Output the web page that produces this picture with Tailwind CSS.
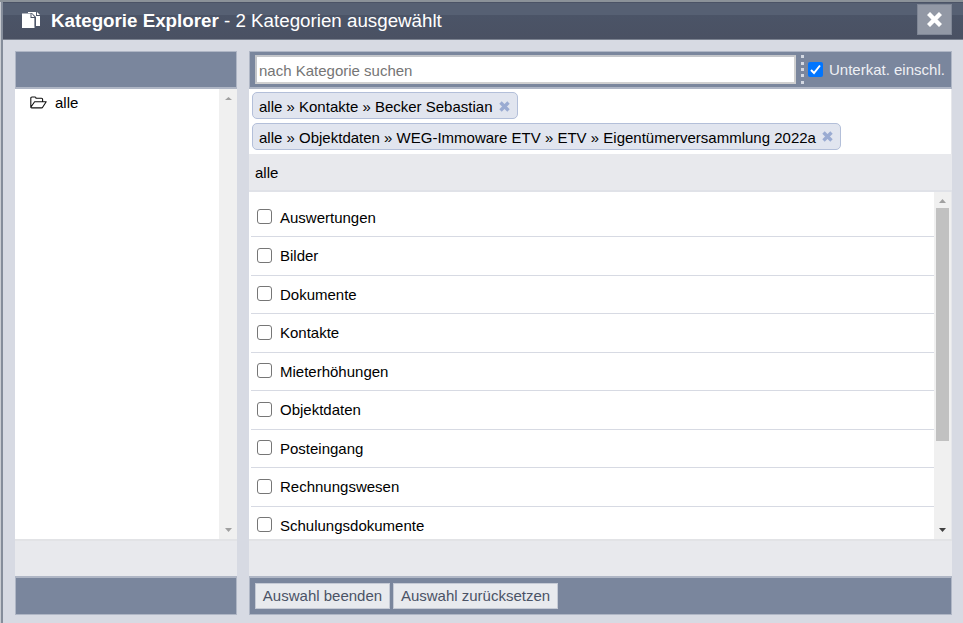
<!DOCTYPE html>
<html lang="de">
<head>
  <meta charset="UTF-8">
  <meta name="viewport" content="width=device-width, initial-scale=1.0">
  <title>Kategorie Explorer</title>
  <script src="https://cdn.jsdelivr.net/npm/@tailwindcss/browser@4"></script>
</head>
<body class="h-screen overflow-hidden bg-[#8b9299] pt-[2px] font-['Liberation_Sans',Arial,sans-serif] text-[15px] leading-[18px] text-black">

  <!-- Dialog -->
  <div class="flex h-[621px] flex-col border-l border-[#c9ccd2]">
  <div class="flex h-full flex-col border-l-2 border-[#858d9b] bg-[#d7dae3]">

    <!-- Titelleiste -->
    <header class="flex h-[38px] shrink-0 items-center border-t border-b border-t-[#4b5366] border-b-[#7b8290] bg-[linear-gradient(#566073_0,#566073_12px,#4b5467_12px,#4a5163_100%)] pr-[11px] pl-[19px] text-white">
      <svg class="mb-[2px] h-[16px] w-[19px]" viewBox="0 0 19 16">
        <path d="M6 0h8v4h4v10h-4V5l-4-4H6z" fill="#fff"/>
        <path d="M15 0l3 3h-3z" fill="#fff"/>
        <path d="M0 1.500h8.500v4.500h4V16H0z" fill="#fff"/>
        <path d="M9.500 1.500l3 3.500h-3z" fill="#fff"/>
        <path d="M13.200 5.500V14.500" stroke="#566073" stroke-width=".8"/>
      </svg>
      <h1 class="ml-[10px] text-[18.75px] whitespace-pre"><b>Kategorie Explorer</b> - 2 Kategorien ausgewählt</h1>
      <button class="mb-[3px] ml-auto flex h-[31px] w-[35px] items-center justify-center border border-[#7f8695] bg-[#9298a5]">
        <svg class="h-[15px] w-[15px]" viewBox="0 0 15 15"><path d="M1.500 1.500l12 12M13.500 1.500l-12 12" stroke="#fff" stroke-width="4.300"/></svg>
      </button>
    </header>

    <main class="flex gap-3 pt-[11px] pl-3">

      <!-- Kategoriebaum -->
      <section class="flex h-[564px] w-[222px] flex-col">
        <div class="h-[38px] shrink-0 border border-b-2 border-[#afb6c5] bg-[#7a869d]"></div>
        <div class="flex h-[450px] shrink-0 justify-between bg-white">
          <div class="flex h-[27px] items-center pl-[15px]">
            <svg class="h-[13px] w-[17px]" viewBox="0 0 17 13" fill="none" stroke="#111" stroke-width="1.1" stroke-linejoin="round">
              <path d="M.8 11.3V2.2Q.8 1 2 1h3q1 0 1 1.2h5.5q1.1 0 1.1 1.1V5.5M.8 11.3L4.6 5.7h11.6L12.8 11q-.4.9-1.3.9H1.6q-.8 0-.8-.6z"/>
            </svg>
            <span class="ml-[8px]">alle</span>
          </div>
          <div class="flex w-[18px] flex-col items-center justify-between bg-[#f0f0f0] pt-[8px] pb-[7px]">
            <svg class="h-[3px] w-[7px]" viewBox="0 0 7 3"><path d="M0 3L3.5 0 7 3z" fill="#a0a0a0"/></svg>
            <svg class="h-[4px] w-[7px]" viewBox="0 0 7 4"><path d="M0 0h7L3.5 4z" fill="#a0a0a0"/></svg>
          </div>
        </div>
        <div class="h-[37px] shrink-0 border-t-2 border-[#e2e3e6] bg-[#e8e9ed]"></div>
        <div class="h-[39px] shrink-0 border border-t-2 border-[#afb6c5] bg-[#7a869d]"></div>
      </section>

      <!-- Kategorieauswahl -->
      <section class="flex h-[564px] w-[703px] flex-col">
        <div class="flex h-[38px] shrink-0 items-start border border-b-2 border-[#afb6c5] bg-[#7a869d] pt-[3px] pl-[5px]">
          <input type="text" placeholder="nach Kategorie suchen" class="h-[29px] w-[541px] shrink-0 border-2 border-t-[#c4c6ca] border-r-[#d0d0d0] border-b-[#d0d0d0] border-l-[#c4c6ca] bg-white px-[2px] pt-[2px] placeholder:text-[#757575]">
          <div class="ml-[5px] h-[29px] border-l-[3px] border-dotted border-[#d3d8e2]"></div>
          <label class="flex h-[29px] items-center pl-[4px] text-[#eef0f4]">
            <span class="flex h-[15px] w-[15px] items-center justify-center rounded-[2px] bg-[#0075ff]">
              <svg class="h-[11px] w-[11px]" viewBox="0 0 11 11"><path d="M1 6l3 3 6-7.5" fill="none" stroke="#fff" stroke-width="2"/></svg>
            </span>
            <span class="ml-[6px] whitespace-nowrap">Unterkat. einschl.</span>
          </label>
        </div>

        <!-- Ausgewählte Kategorien -->
        <div class="flex h-[65px] shrink-0 flex-col items-start gap-1 border-r border-[#e6e7eb] bg-white pt-[3px] pl-[3px]">
          <div class="flex h-[27px] items-center rounded-[5px] border border-[#b3bfd9] bg-[#e1e5ef] pr-[7px] pl-[6px]">
            <span class="mt-[3px] whitespace-nowrap">alle » Kontakte » Becker Sebastian</span>
            <svg class="mt-[2px] ml-[7px] h-[11px] w-[11px]" viewBox="0 0 11 11"><path d="M1.5 1.5l8 8M9.5 1.5l-8 8" stroke="#9aabd2" stroke-width="3.4"/></svg>
          </div>
          <div class="flex h-[27px] items-center rounded-[5px] border border-[#b3bfd9] bg-[#e1e5ef] pr-[7px] pl-[6px]">
            <span class="mt-[3px] whitespace-nowrap">alle » Objektdaten » WEG-Immoware ETV » ETV » Eigentümerversammlung 2022a</span>
            <svg class="ml-[6px] h-[11px] w-[11px]" viewBox="0 0 11 11"><path d="M1.5 1.5l8 8M9.5 1.5l-8 8" stroke="#9aabd2" stroke-width="3.4"/></svg>
          </div>
        </div>

        <div class="flex h-[38px] shrink-0 items-center border-b-2 border-[#e0e2e8] bg-[#e8e9ed] pt-[2px] pl-[6px]">alle</div>

        <div class="flex h-[347px] shrink-0 bg-white">
          <ul class="h-full flex-1 overflow-hidden pt-[6.75px] pl-[2px]">
            <li class="flex h-[38.5px] items-center border-b border-[#d7dae3] pl-[6px]"><span class="mb-[1.5px] h-[15px] w-[15px] rounded-[3px] border-[1.5px] border-[#767676]"></span><span class="mt-[0.5px] ml-[8px]">Auswertungen</span></li>
            <li class="flex h-[38.5px] items-center border-b border-[#d7dae3] pl-[6px]"><span class="mb-[1.5px] h-[15px] w-[15px] rounded-[3px] border-[1.5px] border-[#767676]"></span><span class="mt-[0.5px] ml-[8px]">Bilder</span></li>
            <li class="flex h-[38.5px] items-center border-b border-[#d7dae3] pl-[6px]"><span class="mb-[1.5px] h-[15px] w-[15px] rounded-[3px] border-[1.5px] border-[#767676]"></span><span class="mt-[0.5px] ml-[8px]">Dokumente</span></li>
            <li class="flex h-[38.5px] items-center border-b border-[#d7dae3] pl-[6px]"><span class="mb-[1.5px] h-[15px] w-[15px] rounded-[3px] border-[1.5px] border-[#767676]"></span><span class="mt-[0.5px] ml-[8px]">Kontakte</span></li>
            <li class="flex h-[38.5px] items-center border-b border-[#d7dae3] pl-[6px]"><span class="mb-[1.5px] h-[15px] w-[15px] rounded-[3px] border-[1.5px] border-[#767676]"></span><span class="mt-[0.5px] ml-[8px]">Mieterhöhungen</span></li>
            <li class="flex h-[38.5px] items-center border-b border-[#d7dae3] pl-[6px]"><span class="mb-[1.5px] h-[15px] w-[15px] rounded-[3px] border-[1.5px] border-[#767676]"></span><span class="mt-[0.5px] ml-[8px]">Objektdaten</span></li>
            <li class="flex h-[38.5px] items-center border-b border-[#d7dae3] pl-[6px]"><span class="mb-[1.5px] h-[15px] w-[15px] rounded-[3px] border-[1.5px] border-[#767676]"></span><span class="mt-[0.5px] ml-[8px]">Posteingang</span></li>
            <li class="flex h-[38.5px] items-center border-b border-[#d7dae3] pl-[6px]"><span class="mb-[1.5px] h-[15px] w-[15px] rounded-[3px] border-[1.5px] border-[#767676]"></span><span class="mt-[0.5px] ml-[8px]">Rechnungswesen</span></li>
            <li class="flex h-[38.5px] items-center border-b border-[#d7dae3] pl-[6px]"><span class="mb-[1.5px] h-[15px] w-[15px] rounded-[3px] border-[1.5px] border-[#767676]"></span><span class="mt-[0.5px] ml-[8px]">Schulungsdokumente</span></li>
          </ul>
          <!-- Bildlaufleiste -->
          <div class="flex w-[18px] flex-col items-center border-r border-[#e6e7eb] bg-[#f0f0f0] pt-[7px] pb-[7px]">
            <svg class="h-[4px] w-[7px]" viewBox="0 0 7 4"><path d="M0 4L3.5 0 7 4z" fill="#a0a0a0"/></svg>
            <div class="mt-[5px] h-[233px] w-[13px] bg-[#c1c1c1]"></div>
            <svg class="mt-auto h-[4px] w-[7px]" viewBox="0 0 7 4"><path d="M0 0h7L3.5 4z" fill="#404040"/></svg>
          </div>
        </div>

        <div class="h-[37px] shrink-0 border-t-2 border-[#e2e3e6] bg-[#e8e9ed]"></div>
        <div class="flex h-[39px] shrink-0 items-start gap-[3px] border border-t-2 border-[#afb6c5] bg-[#7a869d] pt-[5px] pl-[5px]">
          <button class="h-[26px] w-[135px] border border-[#c5cad5] bg-[#e8eaee] text-[#4b5366]">Auswahl beenden</button>
          <button class="h-[26px] w-[165px] border border-[#c5cad5] bg-[#e8eaee] text-[#4b5366]">Auswahl zurücksetzen</button>
        </div>
      </section>
    </main>
  </div>
  </div>
</body>
</html>
